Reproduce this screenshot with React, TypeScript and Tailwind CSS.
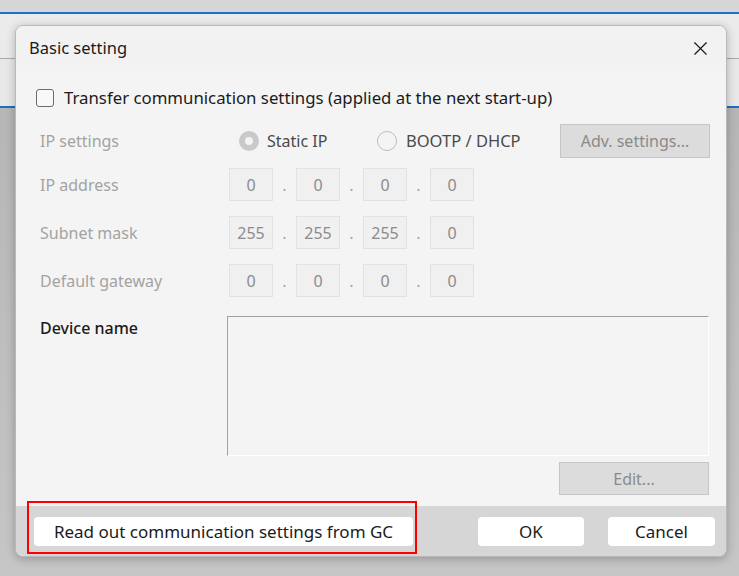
import { X } from "lucide-react";

const font = { fontFamily: '"Noto Sans", "Open Sans", sans-serif' };

function IpField({ values }: { values: string[] }) {
  return (
    <div className="flex items-center">
      {values.map((v, i) => (
        <div key={i} className="flex items-center">
          {i > 0 && <span className="w-[23px] text-center text-[#a8a8a8] leading-none">.</span>}
          <div className="w-[44px] h-[33px] flex items-center justify-center bg-[#f0f0f0] border border-[#e2e2e2] text-[#8c8c8c] text-[16px]">
            {v}
          </div>
        </div>
      ))}
    </div>
  );
}

function IpRow({ label, values, className }: { label: string; values: string[]; className: string }) {
  return (
    <div className={`flex items-center h-[33px] ${className}`}>
      <div className="w-[213px] pl-[24px] text-[#a3a3a3]">{label}</div>
      <IpField values={values} />
    </div>
  );
}

export default function App() {
  return (
    <div className="relative w-[739px] h-[576px] overflow-hidden text-[16px]" style={font}>
      {/* app window behind the dialog */}
      <div className="flex flex-col h-full">
        <div className="h-[12px] bg-[#d6d6d6]" />
        <div className="h-[2px] bg-[#1f6fc5]" />
        <div className="h-[45px] bg-[#ebebeb] border-b border-[#a9a9a9]" />
        <div className="h-[47px] bg-[#e8e8e8]" />
        <div className="h-[2px] bg-[#1f6fc5]" />
        <div className="flex-1 bg-gradient-to-b from-[#b6b6b6] to-[#c6c6c6]" />
      </div>

      {/* dialog */}
      <div className="absolute left-[15px] top-[25px] w-[712px] h-[532px] rounded-[8px] border border-[#b9b9b9] bg-[#f4f4f4] shadow-[0_2px_10px_rgba(0,0,0,0.25)] flex flex-col overflow-hidden">
        <div className="h-[45px] shrink-0 bg-[#f2f2f2] flex items-center justify-between pl-[13px] pr-[14px]">
          <span className="text-[#1b1b1b] text-[16.5px]">Basic setting</span>
          <X size={23} strokeWidth={1.2} className="text-[#1b1b1b]" />
        </div>

        <div className="flex flex-col flex-1">
          <label className="flex items-center h-[20px] mt-[17px] pl-[20px] gap-[10px] text-[#1b1b1b]">
            <span className="w-[18px] h-[18px] rounded-[3px] border border-[#6b6b6b] bg-[#f8f8f8]" />
            <span className="text-[16.8px]">Transfer communication settings (applied at the next start-up)</span>
          </label>

          <div className="flex items-center h-[34px] mt-[16px]">
            <div className="w-[223px] pl-[24px] text-[#a3a3a3]">IP settings</div>
            <div className="flex items-center gap-[8px] w-[138px]">
              <span className="w-[20px] h-[20px] rounded-full bg-[#c9c9c9] flex items-center justify-center">
                <span className="w-[8px] h-[8px] rounded-full bg-[#f4f4f4]" />
              </span>
              <span className="text-[#4a4a4a]">Static IP</span>
            </div>
            <div className="flex items-center gap-[9px] w-[183px]">
              <span className="w-[20px] h-[20px] rounded-full border border-[#bdbdbd]" />
              <span className="text-[#4a4a4a] text-[16.5px]">BOOTP / DHCP</span>
            </div>
            <div className="w-[150px] h-[34px] flex items-center justify-center bg-[#dcdcdc] border border-[#c6c6c6] text-[#8a8a8a]">
              Adv. settings...
            </div>
          </div>

          <IpRow label="IP address" values={["0", "0", "0", "0"]} className="mt-[10px]" />
          <IpRow label="Subnet mask" values={["255", "255", "255", "0"]} className="mt-[15px]" />
          <IpRow label="Default gateway" values={["0", "0", "0", "0"]} className="mt-[15px]" />

          <div className="flex mt-[19px]">
            <div className="w-[211px] pl-[24px] text-[#1b1b1b] font-medium">Device name</div>
            <div className="w-[482px] h-[140px] border border-t-[#a0a0a0] border-l-[#a0a0a0] border-r-white border-b-white bg-[#f4f4f4]" />
          </div>

          <div className="flex justify-end pr-[17px] mt-[6px]">
            <div className="w-[150px] h-[33px] flex items-center justify-center bg-[#dcdcdc] border border-[#c6c6c6] text-[#8a8a8a]">
              Edit...
            </div>
          </div>

          <div className="flex-1" />

          <div className="h-[50px] shrink-0 bg-[#d6d6d6] flex items-start pt-[11px] pl-[18px] pr-[11px]">
            <button className="w-[379px] h-[29px] rounded-[4px] bg-white text-[#1b1b1b] text-[17px]">
              Read out communication settings from GC
            </button>
            <div className="flex-1" />
            <button className="w-[106px] h-[29px] rounded-[4px] bg-white text-[#1b1b1b] text-[17px]">OK</button>
            <button className="w-[107px] h-[29px] ml-[24px] rounded-[4px] bg-white text-[#1b1b1b] text-[17px]">Cancel</button>
          </div>
        </div>
      </div>

      {/* highlight */}
      <div className="absolute left-[27px] top-[501px] w-[390px] h-[53px] border-2 border-[#ff0000] pointer-events-none" />
    </div>
  );
}
